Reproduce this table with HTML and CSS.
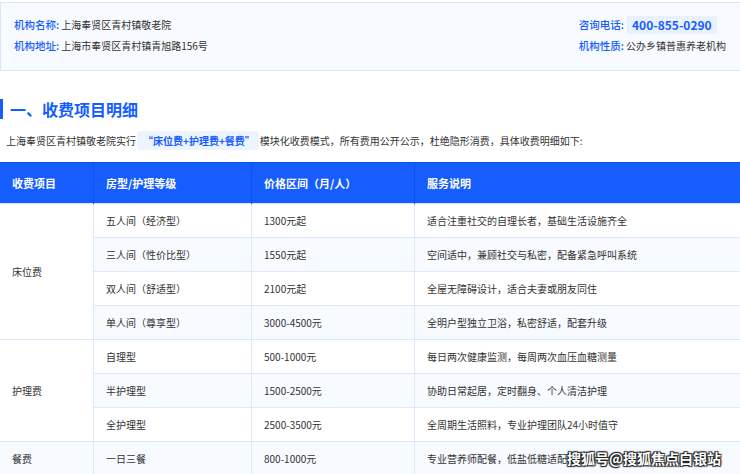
FILE: index.html
```html
<!DOCTYPE html>
<html lang="zh-CN">
<head>
<meta charset="utf-8">
<title>收费项目明细</title>
<link rel="stylesheet" href="styles.css">
</head>
<body>
<div class="page">
  <div class="info">
    <div class="info-col">
      <div class="info-line"><span class="label">机构名称:</span><span class="value">上海奉贤区青村镇敬老院</span></div>
      <div class="info-line"><span class="label">机构地址:</span><span class="value">上海市奉贤区青村镇青旭路156号</span></div>
    </div>
    <div class="info-col">
      <div class="info-line phone-line"><span class="label">咨询电话:</span><span class="phone">400-855-0290</span></div>
      <div class="info-line"><span class="label">机构性质:</span><span class="value">公办乡镇普惠养老机构</span></div>
    </div>
  </div>

  <h2 class="section-title">一、收费项目明细</h2>
  <p class="intro">上海奉贤区青村镇敬老院实行<span class="hl">“床位费+护理费+餐费”</span>模块化收费模式，所有费用公开公示，杜绝隐形消费，具体收费明细如下:</p>

  <table class="fees">
    <thead>
      <tr>
        <th class="c1">收费项目</th>
        <th class="c2">房型/护理等级</th>
        <th class="c3">价格区间（月/人）</th>
        <th class="c4">服务说明</th>
      </tr>
    </thead>
    <tbody>
      <tr><td rowspan="4" class="group">床位费</td><td>五人间（经济型）</td><td>1300元起</td><td>适合注重社交的自理长者，基础生活设施齐全</td></tr>
      <tr><td>三人间（性价比型）</td><td>1550元起</td><td>空间适中，兼顾社交与私密，配备紧急呼叫系统</td></tr>
      <tr><td>双人间（舒适型）</td><td>2100元起</td><td>全屋无障碍设计，适合夫妻或朋友同住</td></tr>
      <tr><td>单人间（尊享型）</td><td>3000-4500元</td><td>全明户型独立卫浴，私密舒适，配套升级</td></tr>
      <tr><td rowspan="3" class="group">护理费</td><td>自理型</td><td>500-1000元</td><td>每日两次健康监测，每周两次血压血糖测量</td></tr>
      <tr><td>半护理型</td><td>1500-2500元</td><td>协助日常起居，定时翻身、个人清洁护理</td></tr>
      <tr><td>全护理型</td><td>2500-3500元</td><td>全周期生活照料，专业护理团队24小时值守</td></tr>
      <tr><td class="group">餐费</td><td>一日三餐</td><td>800-1000元</td><td>专业营养师配餐，低盐低糖适配老年人饮食</td></tr>
    </tbody>
  </table>
</div>
<div class="watermark">搜狐号@搜狐焦点白银站</div>
</body>
</html>
```

FILE: styles.css
```css
html, body {
  margin: 0;
  padding: 0;
  background: #ffffff;
  overflow: hidden;
}
body {
  font-family: "Noto Sans CJK SC", "Noto Sans", sans-serif;
  color: #333333;
  position: relative;
  width: 740px;
  height: 474px;
}
.page {
  padding-top: 2px;
}
.info {
  margin-right: -1px;
  border: 1px solid #dbe6f8;
  background: #f7faff;
  padding: 11px 14px 14px 13px;
  display: flex;
  justify-content: space-between;
}
.info-col {
  display: flex;
  flex-direction: column;
}
.info-line {
  height: 21px;
  display: flex;
  align-items: center;
  font-size: 10px;
  white-space: nowrap;
}
.label {
  color: #165dff;
  font-size: 10.5px;
  font-weight: 500;
  margin-right: 2px;
}
.value {
  color: #333333;
}
.phone {
  margin-left: 1px;
  background: #e9f1ff;
  color: #165dff;
  font-weight: 700;
  font-size: 12px;
  height: 18px;
  line-height: 18px;
  padding: 0 5px;
  border-radius: 2px;
}
.section-title {
  margin: 28px 0 0 0;
  height: 20px;
  line-height: 20px;
  border-left: 3px solid #165dff;
  padding-left: 7px;
  font-size: 16px;
  font-weight: 700;
  color: #165dff;
}
.intro {
  margin: 12px 0 0 0;
  padding-left: 6px;
  font-size: 10px;
  height: 19px;
  line-height: 19px;
  color: #333333;
  white-space: nowrap;
}
.hl {
  display: inline-block;
  background: #eef4ff;
  color: #165dff;
  font-weight: 700;
  padding: 0 4px 0 6px;
  margin: 0 1px;
  border-radius: 3px;
  height: 19px;
}
.fees {
  margin-top: 12px;
  width: 741px;
  border-collapse: collapse;
  table-layout: fixed;
  font-size: 10px;
}
.fees th {
  background: #165dff;
  color: #ffffff;
  font-size: 11px;
  font-weight: 700;
  text-align: left;
  height: 40px;
  padding: 0 12px;
  border-top: 1px solid #0e4ee0;
  border-left: 1px solid #0f52ea;
  border-right: 1px solid #0f52ea;
  white-space: nowrap;
}
.fees th.c1 { width: 69px; border-left: none; }
.fees th.c2 { width: 133px; }
.fees th.c3 { width: 138px; }
.fees td {
  height: 33px;
  padding: 0 12px;
  border: 1px solid #dde8fa;
  color: #333333;
  white-space: nowrap;
  background: #ffffff;
}
.fees tbody tr:nth-child(even) td {
  background: #f7faff;
}
.fees tbody tr:nth-child(even) td.group {
  background: #ffffff;
}
.fees tbody tr:last-child td.group {
  background: #f7faff;
}
.fees td:first-child {
  border-left: none;
}
.watermark {
  position: absolute;
  left: 567px;
  top: 448px;
  font-size: 14px;
  font-weight: 700;
  color: #ffffff;
  white-space: nowrap;
  text-shadow: 0 0 1px #222, 1px 1px 1px #222, -1px -1px 1px #222, 1px -1px 1px #222, -1px 1px 1px #222;
}
```
